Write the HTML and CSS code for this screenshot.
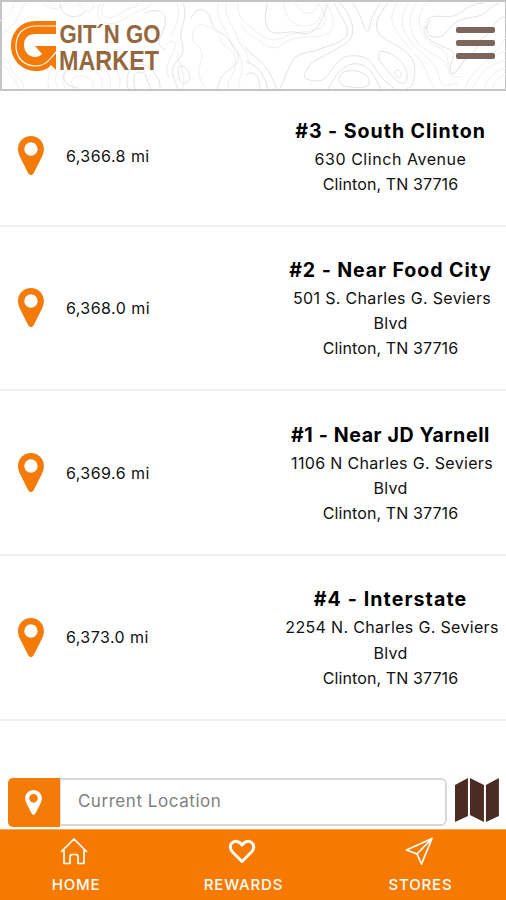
FILE: index.html
```html
<!DOCTYPE html>
<html lang="en">
<head>
<meta charset="utf-8">
<title>Git 'N Go Market - Stores</title>
<link rel="stylesheet" href="styles.css">
</head>
<body>
<svg class="defs" width="0" height="0"><defs>
  <symbol id="pin" viewBox="0 0 26 39"><path fill-rule="evenodd" d="M13 0C5.600 0 0 5.700 0 13c0 3.200 1 5.800 2.300 8.500L10.300 37.200c1.200 2.400 4.200 2.400 5.400 0L23.700 21.500C25 18.800 26 16.200 26 13 26 5.700 20.400 0 13 0Zm0 6.300a6.700 6.700 0 1 1 0 13.400 6.700 6.700 0 0 1 0-13.400Z"/></symbol>
</defs></svg>
<div class="app">
<header class="header">
  <svg class="contours" viewBox="0 0 506 90" aria-hidden="true">
    <g class="faint">
      <path d="M0 20C8 16 12 10 14 2M3 32C17 25 19 12 25 2M43 2C52 12 62 7 66 2M78 2C83 11 93 16 94 2M104 2C97 16 108 21 121 12S137 9 138 2M100 2C91 23 110 28 126 17S148 10 151 2"/>
      <path d="M3 57C13 60 8 68 15 74S23 82 24 88M3 66C10 67 9 75 16 80L19 88M66 88C55 72 70 66 85 68S105 78 101 88M74 88C67 77 77 73 86 76S94 83 92 88M58 88C49 68 66 60 84 61S114 72 110 88M49 88C42 61 72 51 94 56S123 74 119 88"/>
      <path d="M253 35C264 45 274 51 283 43S304 37 320 35 337 19 326 2M253 28C270 42 276 40 286 35S310 32 320 27 324 11 318 2M284 2C285 18 294 26 307 25S320 13 326 2M295 2C300 10 309 17 315 9L319 2"/>
      <path d="M416 2C409 16 407 25 416 39S442 53 447 66 454 77 463 75M408 2C398 20 402 30 412 42S436 61 439 75 446 84 458 82M427 2C416 14 418 27 426 38S447 43 448 61 454 73 462 63 477 55 490 52 501 40 506 37M397 2C386 19 394 28 405 42S425 61 428 76L435 88M465 88C470 72 485 57 506 50M472 88C478 74 489 63 506 59M484 88C487 78 494 70 506 67M492 88C495 79 500 75 506 73"/>
      <path d="M170 35C176 27 181 15 177 2M166 44C177 35 177 44 173 52S164 67 169 77M178 50C176 61 183 67 184 77L183 88M206 88C192 70 203 64 202 53S190 44 193 32 205 23 214 29 217 40 225 45 237 54 235 66 226 79 229 88M218 2C216 17 224 25 228 35S240 49 242 63 235 78 241 88M226 2C224 17 234 25 237 36S250 50 248 64M238 2C237 18 246 22 253 28M253 35C247 33 243 27 240 22"/>
    </g>
    <g class="strong">
      <path d="M267 2C267 9 264 13 266 22S271 31 277 32 290 29 299 32 316 30 321 20 325 8 329 2M340 2C349 12 355 25 352 34S339 46 331 51 312 59 307 68 305 79 316 80 329 70 336 63 346 54 358 55 372 63 379 73 388 81 395 88M353 2C361 14 362 21 365 28S369 28 371 20 377 8 380 2M388 2C378 14 374 23 378 31S397 43 406 51 416 66 414 77 411 84 407 88"/>
      <path d="M280 88C285 77 288 67 293 59S311 52 323 47 345 41 347 33 343 20 334 2M328 88C337 70 347 61 359 63S375 77 381 88M339 80C338 70 348 69 356 70S371 77 369 83 350 86 343 85ZM379 54C377 48 388 50 396 56S408 69 407 77 400 83 394 77 386 67 379 59ZM395 72C395 67 402 69 401 74S395 76 395 72Z"/>
      <path d="M425 22C432 9 447 20 458 13S472 3 484 2M430 19C422 30 430 38 439 36S449 23 461 19 479 17 486 11 494 4 500 2M424 26C423 39 438 44 449 48S447 63 451 71 459 61 470 54 474 42 485 35 490 21 506 15"/>
      <path d="M183 2C188 14 182 23 181 32S186 48 181 55 169 66 174 78L178 88M191 18C194 6 206 6 210 16S210 25 221 32 230 43 237 52 228 68 221 76L217 88M178 69C177 64 185 63 188 70S191 80 185 82 179 76 178 69ZM245 46Q249 51 253 54C267 64 272 76 277 88M246 60Q250 62 253 64C262 69 265 78 268 88M246 74Q249 71 253 72C258 74 260 81 260 88"/>
      <path d="M60 2C62 18 79 19 86 10M66 69C59 80 69 86 78 87M128 88C123 65 139 58 149 67S160 79 160 88M135 88C131 72 137 68 145 73L151 88M145 12C160 5 169 13 164 27S155 43 166 49"/>
      <circle cx="426" cy="26" r="1"/>
    </g>
  </svg>
  <svg class="logo" viewBox="0 0 156 60" role="img">
    <path class="logo-mark" d="M46 5H26C10 5 1 17 1 30s10 25 25 25c7 0 12-2 15-6l5 5V30H25l7 8c-2 2-4 3-7 3-6 0-11-5-11-12 0-8 5-11 12-11h20Z"/>
    <path class="logo-line" d="M46 10H27C13 10 6 18 6 30s8 20 20 20c7 0 11-3 15-8l5-6"/>
    <text class="logo-text" x="49.500" y="26.500" textLength="101" lengthAdjust="spacingAndGlyphs">GIT´N GO</text>
    <text class="logo-text market" x="49" y="53.500" textLength="100" lengthAdjust="spacingAndGlyphs">MARKET</text>
  </svg>
  <div class="menu"><i></i><i></i><i></i></div>
</header>
<main class="list">
  <section class="store short">
    <svg class="pin"><use href="#pin"/></svg><span class="miles">6,366.8 mi</span>
    <div class="info"><h2 class="t3">#3 - South Clinton</h2><p class="wide">630 Clinch Avenue</p><p class="city">Clinton, TN 37716</p></div>
  </section>
  <section class="store">
    <svg class="pin"><use href="#pin"/></svg><span class="miles">6,368.0 mi</span>
    <div class="info"><h2 class="t2">#2 - Near Food City</h2><p class="street">501 S. Charles G. Seviers</p><p>Blvd</p><p class="city">Clinton, TN 37716</p></div>
  </section>
  <section class="store">
    <svg class="pin"><use href="#pin"/></svg><span class="miles">6,369.6 mi</span>
    <div class="info"><h2 class="t1">#1 - Near JD Yarnell</h2><p class="street">1106 N Charles G. Seviers</p><p>Blvd</p><p class="city">Clinton, TN 37716</p></div>
  </section>
  <section class="store">
    <svg class="pin"><use href="#pin"/></svg><span class="miles">6,373.0 mi</span>
    <div class="info"><h2 class="t4">#4 - Interstate</h2><p class="street">2254 N. Charles G. Seviers</p><p>Blvd</p><p class="city">Clinton, TN 37716</p></div>
  </section>
</main>
<div class="search">
  <div class="locate"><svg><use href="#pin"/></svg></div>
  <div class="field">Current Location</div>
  <svg class="map" viewBox="0 0 46 46"><path d="M1 8 14 1v38L1 45ZM16 1l14 7v37l-14-7ZM32 8l13-7v38l-13 6Z"/></svg>
</div>
<nav class="nav">
  <div class="tab home"><svg viewBox="0 0 28 28"><path d="M1.500 14.500 14 2l12.500 12.500M4 12.500V26.500h6V20q0-2.500 2-2.500h4q2 0 2 2.500v6.500h6v-14"/></svg><span>HOME</span></div>
  <div class="tab rewards"><svg class="heart" viewBox="0 0 28 28"><path d="M14 24.500 4.500 15C1.500 12 1.500 8 4.300 5.700S11 4 14 8c3-4 7-4.600 9.700-2.300s2.800 6.300-.2 9.300Z"/></svg><span>REWARDS</span></div>
  <div class="tab stores"><svg viewBox="0 0 28 28"><path d="M1.500 13 27 1.500 16.500 27 12 17ZM12 17 27 1.500"/></svg><span>STORES</span></div>
</nav>
</div>
</body>
</html>
```
FILE: styles.css
```css
* { box-sizing: border-box; }
body { margin: 0; background: #fff; color: #111; font-family: Inter, "Liberation Sans", sans-serif; }
.defs { position: absolute; }
.app { width: 506px; height: 900px; overflow: hidden; display: flex; flex-direction: column; }
.header { position: relative; flex: none; height: 91px; border: 2px solid #c4c4c4; border-right-width: 1px; display: flex; justify-content: space-between; padding: 14px 10px 0 8px; }
.contours { position: absolute; left: -2px; top: -1px; width: 506px; height: 90px; fill: none; stroke-width: 1; }
.faint { stroke: #efefef; }
.strong { stroke: #e2e2e2; }
.logo { position: relative; width: 156px; height: 60px; }
.logo-mark { fill: #f47b08; }
.logo-line { fill: none; stroke: #fff; stroke-width: 1.200; }
.logo-text { font: bold 25.500px "Liberation Sans", sans-serif; fill: #94673d; }
.logo-text.market { font-size: 28px; }
.menu { position: relative; width: 39px; padding-top: 11px; display: flex; flex-direction: column; gap: 6.500px; }
.menu i { height: 6.300px; flex: none; border-radius: 2px; background: #7c655a; }
.list { flex: none; margin-top: -4px; position: relative; }
.store { height: 164.700px; border-bottom: 2px solid #efefef; display: flex; align-items: center; padding-left: 18px; }
.store.short { height: 139.500px; }
.pin { width: 26px; height: 39px; fill: #f47b08; margin-right: 22px; }
.miles { width: 202px; font-size: 16px; letter-spacing: .45px; }
.info { width: 244px; padding: 2px 0 0 4px; margin-right: -4px; text-align: center; }
h2 { margin: 0 0 2px; font-size: 19.600px; line-height: 28px; font-weight: 700; color: #000; white-space: nowrap; }
.t1 { letter-spacing: .6px; }
.t2 { letter-spacing: .9px; }
.t3 { letter-spacing: .95px; }
.t4 { letter-spacing: 1.100px; }
p { margin: 0; font-size: 16px; line-height: 25.200px; white-space: nowrap; letter-spacing: .33px; }
.wide { letter-spacing: .55px; }
.street { padding-left: 3px; }
.city { letter-spacing: .1px; }
.search { flex: none; height: 49px; margin-top: 57px; padding: 0 6px 0 8px; display: flex; }
.locate { width: 52px; height: 49px; background: #f47b08; border-radius: 5px 0 0 5px; display: flex; align-items: center; justify-content: center; }
.locate svg { width: 17px; height: 25px; fill: #fff; }
.field { width: 388px; height: 48px; border: 2px solid #d5d8d9; border-left: 1px solid #d5d8d9; border-radius: 0 6px 6px 0; padding-left: 17px; font-size: 17px; line-height: 43px; letter-spacing: .55px; color: #808080; }
.map { width: 46px; height: 46px; margin: -1px 0 0 7px; fill: #4b2b24; }
.nav { margin-top: 2px; flex: 1; background: #f67a00; border-top: 1px solid #fca65c; display: flex; color: #fff; }
.tab { display: flex; flex-direction: column; align-items: center; padding-top: 7px; }
.tab svg { width: 28px; height: 28px; fill: none; stroke: #fff; stroke-width: 1.700; stroke-linejoin: round; stroke-linecap: round; }
.tab .heart { stroke-width: 3; }
.tab span { margin-top: 11px; line-height: 17px; white-space: nowrap; font-size: 15px; font-weight: 500; letter-spacing: .8px; }
.home { width: 152px; }
.home svg { margin-left: -5px; }
.rewards { width: 183px; }
.rewards svg { margin-left: -3px; }
.stores { width: 171px; }
.stores svg { margin-left: -3px; }
```
